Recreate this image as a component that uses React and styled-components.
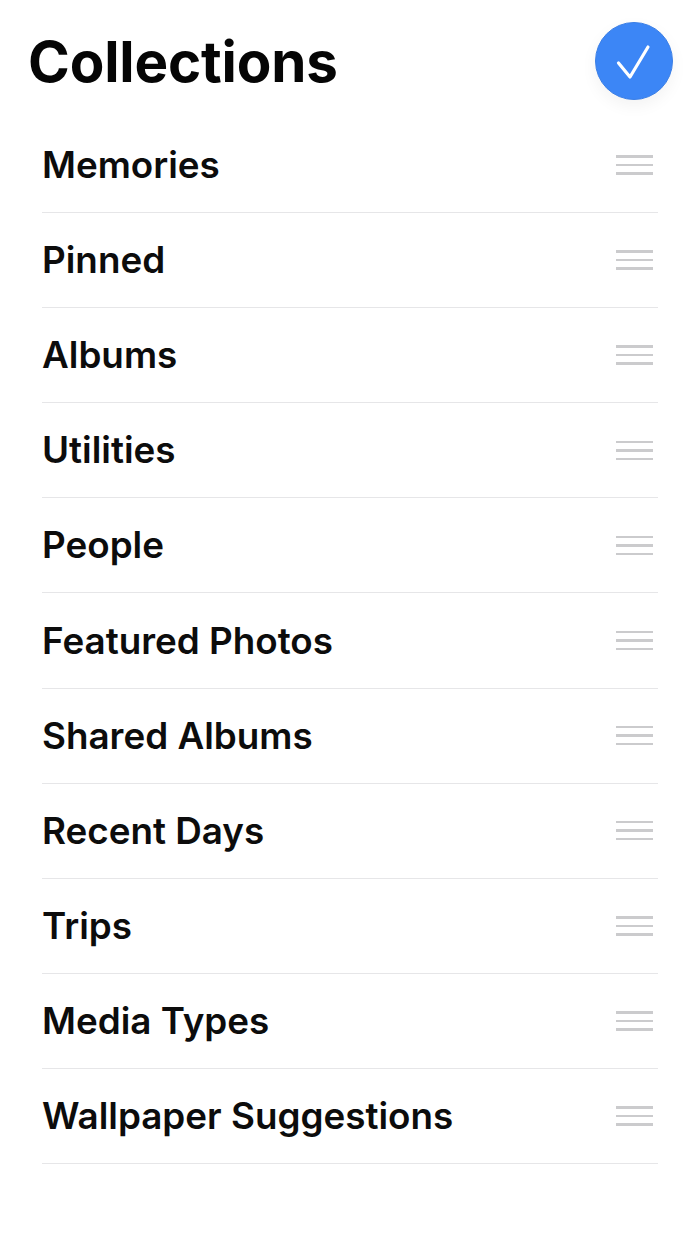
import React from "react";
import styled, { createGlobalStyle } from "styled-components";

const Global = createGlobalStyle`
  html, body { margin: 0; padding: 0; background: #fff; }
  body { font-family: Inter, "Liberation Sans", sans-serif; -webkit-font-smoothing: antialiased; }
`;

const Page = styled.div`
  width: 700px;
  height: 1250px;
  box-sizing: border-box;
  padding: 22px 27px 0 29px;
  background: #fff;
  overflow: hidden;
`;

const Header = styled.header`
  display: flex;
  align-items: center;
  justify-content: space-between;
  height: 78px;
`;

const Title = styled.h1`
  margin: 0 0 0 -1px;
  padding-top: 2px;
  font-size: 56.5px;
  line-height: 78px;
  font-weight: 700;
  letter-spacing: -0.15px;
  color: #050505;
`;

const DoneButton = styled.button`
  width: 78px;
  height: 78px;
  padding: 0;
  border: 1px solid #3b7fe6;
  box-sizing: border-box;
  border-radius: 50%;
  background: #3c86f6;
  box-shadow: 0 6px 16px rgba(0, 0, 0, 0.05);
  display: flex;
  align-items: center;
  justify-content: center;
`;

const List = styled.ul`
  list-style: none;
  margin: 18px 15px 0 13px;
  padding: 0;
`;

const Row = styled.li`
  display: flex;
  align-items: center;
  justify-content: space-between;
  height: 95.1px;
  box-sizing: border-box;
  border-bottom: 1px solid #e6e6e8;
  padding-right: 5px;
`;

const Label = styled.span`
  font-size: 36.8px;
  font-weight: 600;
  letter-spacing: 0;
  padding-bottom: 1px;
  color: #0c0c0c;
`;

const Grip = styled.span`
  display: flex;
  flex-direction: column;
  gap: 6px;
  width: 37px;
`;

const GripLine = styled.span`
  display: block;
  height: 2.5px;
  background: #cbcbcd;
`;

const items = [
  "Memories",
  "Pinned",
  "Albums",
  "Utilities",
  "People",
  "Featured Photos",
  "Shared Albums",
  "Recent Days",
  "Trips",
  "Media Types",
  "Wallpaper Suggestions",
];

export default function App() {
  return (
    <Page>
      <Global />
      <Header>
        <Title>Collections</Title>
        <DoneButton aria-label="Done">
          <svg width="38" height="38" viewBox="0 0 38 38" fill="none">
            <path
              d="M3.5 21 L15 35 L33 5"
              stroke="#fff"
              strokeWidth="3.2"
              strokeLinecap="round"
              strokeLinejoin="round"
            />
          </svg>
        </DoneButton>
      </Header>
      <List>
        {items.map((item) => (
          <Row key={item}>
            <Label>{item}</Label>
            <Grip>
              <GripLine />
              <GripLine />
              <GripLine />
            </Grip>
          </Row>
        ))}
      </List>
    </Page>
  );
}
